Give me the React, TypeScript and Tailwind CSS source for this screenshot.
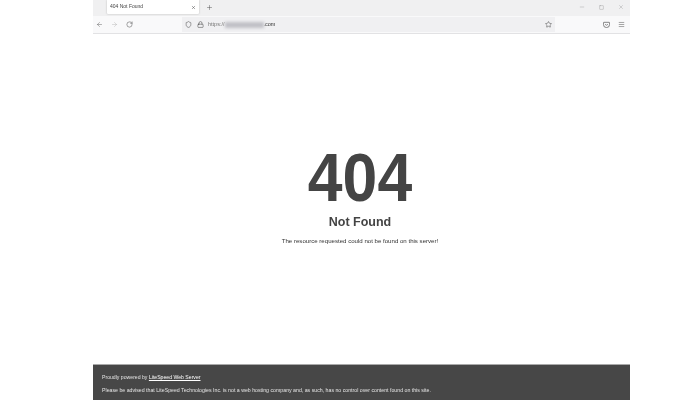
import { ArrowLeft, ArrowRight, RotateCw, Shield, Lock, Star, Menu, Plus, X, Minus, Square } from "lucide-react";

const App = () => {
  return (
    <div className="h-[400px] w-[700px] overflow-hidden bg-white flex justify-center font-['Liberation_Sans',sans-serif]">
      <div className="ml-[23px] w-[537px] h-full flex flex-col bg-white text-[#444444] blur-[0.3px]">
        {/* Tab strip */}
        <div className="h-[16px] bg-[#f0f0f1] flex items-start shrink-0">
          <div className="ml-[14px] w-[92px] h-[14px] bg-white rounded-b-[1px] shadow-[0_0_2px_rgba(0,0,0,0.25)] flex items-center justify-between pl-[3px] pr-[3px]">
            <span className="text-[5px] text-[#444]">404 Not Found</span>
            <X size={5} strokeWidth={2} className="text-[#333]" />
          </div>
          <Plus size={7} strokeWidth={1.5} className="ml-[7px] mt-[4px] text-[#444]" />
          <div className="ml-auto flex items-center gap-[14px] pr-[6px] pt-[4px] text-[#666]">
            <Minus size={6} strokeWidth={1} />
            <Square size={5} strokeWidth={1.2} />
            <X size={6} strokeWidth={1} />
          </div>
        </div>

        {/* Toolbar */}
        <div className="h-[18px] bg-[#f9f9fa] border-b border-[#e2e2e4] flex items-center shrink-0 pl-[3px] pr-[5px]">
          <ArrowLeft size={7} strokeWidth={1.5} className="text-[#555]" />
          <ArrowRight size={7} strokeWidth={1.5} className="ml-[8px] text-[#b0b0b0]" />
          <RotateCw size={7} strokeWidth={1.6} className="ml-[8px] text-[#444]" />
          <div className="ml-[49px] w-[373px] h-[15px] bg-[#f0f0f2] flex items-center pl-[3px] pr-[3px]">
            <Shield size={7} strokeWidth={1.6} className="text-[#333]" />
            <Lock size={7} strokeWidth={1.6} className="ml-[5px] text-[#333]" />
            <span className="ml-[4px] text-[5.5px] text-[#777]">https://</span>
            <span className="w-[39px] h-[6px] bg-[#c0c0c6] blur-[1.5px]" />
            <span className="text-[5.5px] text-[#333]">.com</span>
            <Star size={7} strokeWidth={1.6} className="ml-auto text-[#333]" />
          </div>
          <svg viewBox="0 0 16 16" className="ml-auto w-[7px] h-[7px] text-[#555]" fill="none" stroke="currentColor" strokeWidth="1.6">
            <path d="M2 3h12a1 1 0 0 1 1 1v4a7 7 0 0 1-14 0V4a1 1 0 0 1 1-1z" />
            <path d="M5 7l3 3 3-3" />
          </svg>
          <Menu size={7} strokeWidth={1.6} className="ml-[8px] text-[#444]" />
        </div>

        {/* Error content */}
        <div className="flex-1 flex flex-col items-center pr-[3px]">
          <h1 className="mt-[116px] text-[62.5px] leading-[54px] font-bold scale-y-110">404</h1>
          <h2 className="mt-[11px] text-[12.5px] leading-[15px] font-bold">Not Found</h2>
          <p className="mt-[7px] text-[6.1px] leading-[8px] text-[#333]">The resource requested could not be found on this server!</p>
        </div>

        {/* Footer */}
        <div className="h-[36px] bg-[#474747] border-t border-[#aaaaaa] shrink-0 pl-[9px] pt-[9px] leading-[7px] text-[#e4e4e4]">
          <p className="text-[5.15px]">Proudly powered by <span className="underline text-white">LiteSpeed Web Server</span></p>
          <p className="mt-[6px] text-[5.23px]">Please be advised that LiteSpeed Technologies Inc. is not a web hosting company and, as such, has no control over content found on this site.</p>
        </div>
      </div>
    </div>
  );
};

export default App;
